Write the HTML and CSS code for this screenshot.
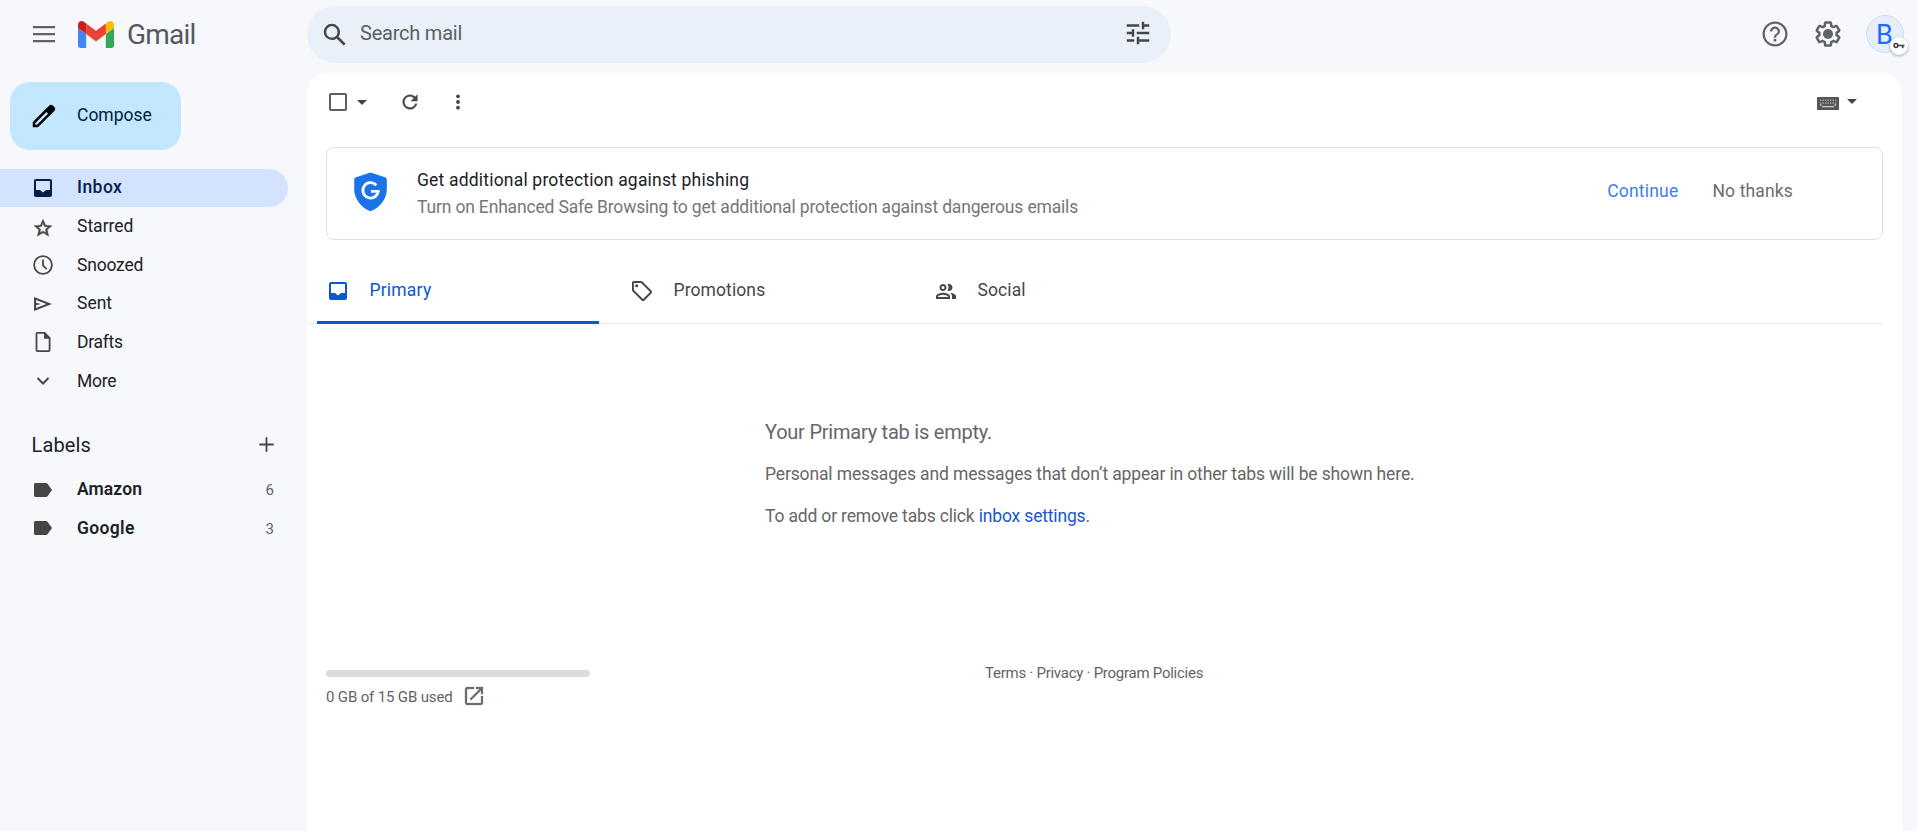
FILE: index.html
```html
<!DOCTYPE html>
<html lang="en">
<head>
<meta charset="utf-8">
<title>Gmail</title>
<link rel="stylesheet" href="styles.css">
</head>
<body>
<header class="header">
  <div class="brand">
    <svg class="menu" viewBox="0 0 30 30"><path d="M4 8.2h22M4 15.2h22M4 22.2h22" stroke="#5f6368" stroke-width="2.2"/></svg>
    <svg class="logo" viewBox="52 42 88 66"><path fill="#4285f4" d="M58 108h14V74L52 59v43c0 3.32 2.69 6 6 6"/><path fill="#34a853" d="M120 108h14c3.32 0 6-2.69 6-6V59l-20 15"/><path fill="#fbbc04" d="M120 48v26l20-15v-8c0-7.42-8.47-11.65-14.4-7.2"/><path fill="#ea4335" d="M72 74V48l24 18 24-18v26L96 92"/><path fill="#c5221f" d="M52 51v8l20 15V48l-5.6-4.2c-5.94-4.45-14.4-.22-14.4 7.2"/></svg>
    <span class="wordmark">Gmail</span>
  </div>
  <div class="search">
    <svg class="i30" viewBox="0 0 24 24"><path d="M20.49 19l-5.73-5.73C15.53 12.2 16 10.91 16 9.5A6.5 6.5 0 1 0 9.5 16c1.41 0 2.7-.47 3.77-1.24L19 20.49 20.49 19zM5 9.5C5 7.01 7.01 5 9.5 5S14 7.01 14 9.5 11.99 14 9.5 14 5 11.99 5 9.5z"/></svg>
    <span class="search-text">Search mail</span>
    <svg class="i30 tune" viewBox="0 0 24 24"><path d="M3 17v2h6v-2H3zM3 5v2h10V5H3zm10 16v-2h8v-2h-8v-2h-2v6h2zM7 9v2H3v2h4v2h2V9H7zm14 4v-2H11v2h10zm-6-4h2V7h4V5h-4V3h-2v6z"/></svg>
  </div>
  <div class="account">
    <svg class="i30 gray" viewBox="0 0 24 24"><path d="M11 18h2v-2h-2v2zm1-16C6.48 2 2 6.48 2 12s4.48 10 10 10 10-4.48 10-10S17.52 2 12 2zm0 18.2c-4.5 0-8.2-3.7-8.2-8.2S7.5 3.800 12 3.800s8.200 3.700 8.200 8.200-3.700 8.200-8.200 8.200zm0-14.200c-2.210 0-4 1.790-4 4h1.800c0-1.200 1-2.200 2.200-2.200s2.200 1 2.200 2.200c0 2-3.100 1.750-3.100 5h1.800c0-2.250 3.100-2.500 3.100-5 0-2.210-1.790-4-4-4z"/></svg>
    <svg class="i30 gray" viewBox="0 0 24 24"><path d="M13.850 22.250h-3.700c-.740 0-1.360-.540-1.450-1.270l-.270-1.890c-.270-.140-.530-.290-.790-.460l-1.800.720c-.700.260-1.470-.030-1.810-.650L2.200 15.530c-.350-.660-.200-1.440.360-1.880l1.530-1.190c-.010-.150-.020-.300-.020-.460 0-.150.010-.310.020-.460l-1.520-1.190c-.590-.450-.740-1.260-.370-1.880l1.850-3.190c.340-.620 1.110-.900 1.790-.630l1.810.730c.260-.170.520-.320.780-.460l.270-1.910c.090-.700.710-1.250 1.440-1.250h3.700c.740 0 1.360.540 1.450 1.270l.270 1.890c.270.140.530.290.790.460l1.800-.720c.710-.260 1.480.030 1.820.650l1.840 3.180c.360.660.200 1.440-.360 1.880l-1.520 1.190c.010.150.020.300.020.460s-.010.310-.020.460l1.520 1.190c.560.450.720 1.230.370 1.860l-1.860 3.220c-.340.620-1.110.900-1.800.630l-1.800-.720c-.260.170-.520.320-.780.460l-.270 1.910c-.100.680-.720 1.220-1.460 1.220zm-3.230-2h2.760l.370-2.550.530-.220c.440-.180.880-.440 1.340-.780l.450-.340 2.380.960 1.380-2.400-2.030-1.580.070-.560c.030-.260.060-.510.060-.780s-.030-.530-.060-.780l-.070-.560 2.030-1.580-1.390-2.400-2.390.960-.450-.350c-.420-.320-.870-.580-1.330-.770l-.520-.220-.370-2.550h-2.760l-.370 2.550-.530.210c-.440.190-.880.440-1.340.790l-.450.330-2.380-.950-1.390 2.390 2.030 1.580-.070.560a7 7 0 0 0-.060.790c0 .260.020.530.060.780l.070.560-2.030 1.580 1.380 2.400 2.390-.960.450.350c.430.330.860.580 1.330.770l.530.220.380 2.550z"/><circle cx="12" cy="12" r="4"/></svg>
    <div class="avatar">B<span class="badge"><svg viewBox="0 0 12 8"><circle cx="3" cy="3.500" r="1.900" fill="none" stroke="#3c4043" stroke-width="1.500"/><path d="M5 3.500h6.500M9.700 3.500v2.800" fill="none" stroke="#3c4043" stroke-width="1.600"/></svg></span></div>
  </div>
</header>
<div class="body">
  <nav class="side">
    <div class="compose"><svg class="i30" viewBox="0 0 24 24"><path fill="#000" d="M20.410 4.940l-1.350-1.350c-.780-.780-2.050-.780-2.830 0L3 16.820V21h4.180L20.410 7.770c.790-.780.790-2.050 0-2.830zM6.410 19.060H5v-1.360l8.900-8.900 1.360 1.360-8.850 8.900z"/></svg><span class="t-compose">Compose</span></div>
    <div class="item on"><svg class="i24" viewBox="0 0 24 24"><path fill="#041e49" d="M19 3H5a2 2 0 0 0-2 2v14c0 1.100.900 2 2 2h14c1.100 0 2-.900 2-2V5a2 2 0 0 0-2-2zm0 11h-4l-3 2.600L9 14H5V5h14v9z"/></svg><span class="t-inbox">Inbox</span></div>
    <div class="item"><svg class="i24 low" viewBox="0 0 24 24"><path stroke="#444746" stroke-width=".4" d="M21 9.700l-6.300-.550L12 3.300 9.300 9.150 3 9.700l4.770 4.150L6.300 20.200 12 16.850l5.700 3.350-1.470-6.350L21 9.700zM12 14.900l-3.120 1.900.830-3.540-2.750-2.380 3.620-.31L12 7.300l1.420 3.340 3.620.31-2.750 2.380.830 3.550L12 14.900z"/></svg><span class="t-starred">Starred</span></div>
    <div class="item"><svg class="i24" viewBox="0 0 24 24"><path d="M12 2.200a9.800 9.800 0 1 0 0 19.600 9.800 9.800 0 0 0 0-19.600zm0 17.800a8 8 0 1 1 0-16 8 8 0 0 1 0 16zm.9-13.500h-1.800v6.200l4 4 1.200-1.200-3.400-3.500V6.500z"/></svg><span class="t-snoozed">Snoozed</span></div>
    <div class="item"><svg class="i24" viewBox="0 0 24 24"><path d="M3 5v14l18-7L3 5zm2 3l10.500 4L5 16v-2.700l5-1.300-5-1.300V8z"/></svg><span class="t-sent">Sent</span></div>
    <div class="item"><svg class="i24" viewBox="0 0 24 24"><path d="M14 2H6.500C5.400 2 4.600 2.900 4.600 4v16c0 1.100.8 2 1.900 2h11c1.100 0 2-.9 2-2V7.500L14 2zM6.400 20.200V3.800H13v5h4.700v11.400H6.400z"/></svg><span class="t-drafts">Drafts</span></div>
    <div class="item"><svg class="i24" viewBox="0 0 24 24"><path d="M6.500 9l5.500 5.500L17.500 9" fill="none" stroke="#444746" stroke-width="2"/></svg><span class="t-more">More</span></div>
    <div class="labels-head"><span class="t-labels">Labels</span><svg class="plus" viewBox="0 0 24 24"><path d="M12 4.500v15M4.500 12h15" stroke="#444746" stroke-width="1.900"/></svg></div>
    <div class="item lab"><svg class="i24" viewBox="0 0 24 24"><path d="M16.500 5.800C16.200 5.300 15.600 5 15 5H4.500C3.700 5 3 5.700 3 6.500v11c0 .8.700 1.500 1.500 1.500H15c.6 0 1.200-.3 1.500-.8L21 12l-4.500-6.200z"/></svg><span class="t-amazon">Amazon</span><span class="count">6</span></div>
    <div class="item lab"><svg class="i24" viewBox="0 0 24 24"><path d="M16.500 5.800C16.200 5.300 15.600 5 15 5H4.500C3.700 5 3 5.700 3 6.500v11c0 .8.700 1.500 1.500 1.500H15c.6 0 1.200-.3 1.500-.8L21 12l-4.500-6.200z"/></svg><span class="t-google">Google</span><span class="count">3</span></div>
  </nav>
  <main class="panel">
    <div class="toolbar">
      <span class="check"></span><span class="caret c1"></span>
      <svg class="refresh" viewBox="0 0 24 24"><path stroke="#444746" stroke-width=".4" d="M17.650 6.350A7.960 7.960 0 0 0 12 4a8 8 0 1 0 7.730 10h-2.080A6 6 0 1 1 12 6c1.660 0 3.140.690 4.220 1.780L13 11h7V4l-2.350 2.350z"/></svg>
      <svg class="dots" viewBox="0 0 24 24"><circle cx="12" cy="6.300" r="1.900"/><circle cx="12" cy="12" r="1.900"/><circle cx="12" cy="17.700" r="1.900"/></svg>
      <svg class="keyboard" viewBox="0 0 22 13"><rect width="22" height="13" rx=".8" fill="#555756"/><path d="M3 3.300h16M3 6h16" stroke="#aaa" stroke-width="1.500" stroke-dasharray="1.300 1.200"/><path d="M3 8h1.500M17.500 8H19M5 9.700h12" stroke="#ccc" stroke-width="1.300"/></svg><span class="caret c2"></span>
    </div>
    <section class="banner">
      <svg class="shield" viewBox="0 0 33 40"><path fill="#1a73e8" d="M16.500.5L31 5.200c1.100.4 1.800 1.300 1.800 2.500V17c0 10.200-6.800 18.600-16.300 22.300C7 35.600.2 27.200.2 17V7.700c0-1.200.7-2.100 1.800-2.500z"/><path d="M22.300 13.200a7.700 7.700 0 1 0 1.900 6.100H17" fill="none" stroke="#fff" stroke-width="2.800"/></svg>
      <div class="banner-text"><span class="b-title">Get additional protection against phishing</span><span class="b-sub">Turn on Enhanced Safe Browsing to get additional protection against dangerous emails</span></div>
      <span class="continue">Continue</span><span class="nothanks">No thanks</span>
    </section>
    <div class="tabs">
      <div class="tab active"><svg class="i24" viewBox="0 0 24 24"><path fill="#0b57d0" d="M19 3H5a2 2 0 0 0-2 2v14c0 1.100.900 2 2 2h14c1.100 0 2-.900 2-2V5a2 2 0 0 0-2-2zm0 11h-4l-3 2.600L9 14H5V5h14v9z"/></svg><span class="t-primary">Primary</span></div>
      <div class="tab"><svg class="i24" viewBox="0 0 24 24"><path d="M21.400 11.600l-9-9C12 2.200 11.500 2 11 2H4c-1.100 0-2 .9-2 2v7c0 .6.200 1.100.6 1.400l9 9c.4.400.9.600 1.400.6s1-.2 1.400-.6l7-7c.4-.4.600-.9.600-1.400s-.2-1.100-.6-1.400zM13 20l-9.100-9V3.900H11l9.100 9L13 20z"/><circle cx="6.700" cy="6.700" r="1.500"/></svg><span class="t-promo">Promotions</span></div>
      <div class="tab"><svg class="i24" viewBox="0 0 24 24"><path d="M9 13.750c-2.340 0-7 1.170-7 3.500V20h14v-2.750c0-2.330-4.660-3.500-7-3.500zM4 18v-.75c.840-.58 3.210-1.500 5-1.500s4.160.92 5 1.500V18H4zM9 12c1.930 0 3.500-1.570 3.500-3.500S10.930 5 9 5 5.500 6.570 5.500 8.500 7.070 12 9 12zm0-5a1.500 1.500 0 1 1 0 3 1.500 1.500 0 0 1 0-3zm7.040 6.810c1.160.840 1.960 1.960 1.960 3.440V20h4v-2.750c0-2.020-3.500-3.170-5.960-3.440zM15 12c1.930 0 3.500-1.570 3.500-3.500S16.930 5 15 5c-.540 0-1.040.130-1.500.350.630.890 1 1.980 1 3.150s-.370 2.260-1 3.150c.460.220.960.350 1.500.350z"/></svg><span class="t-social">Social</span></div>
    </div>
    <section class="empty">
      <p class="e-title"><span>Your Primary tab is empty.</span></p>
      <p class="e-one"><span>Personal messages and messages that don’t appear in other tabs will be shown here.</span></p>
      <p class="e-two"><span>To add or remove tabs click <a>inbox settings</a>.</span></p>
    </section>
    <footer class="footer">
      <div class="storage"><div class="bar"></div><div class="used"><span>0 GB of 15 GB used</span><svg class="open" viewBox="0 0 24 24"><path d="M19 19H5V5h7V3H5a2 2 0 0 0-2 2v14a2 2 0 0 0 2 2h14c1.100 0 2-.9 2-2v-7h-2v7zM14 3v2h3.590l-9.830 9.830 1.410 1.410L19 6.410V10h2V3h-7z" stroke="#6a6e73" stroke-width=".3"/></svg></div></div>
      <div class="links"><span>Terms · Privacy · Program Policies</span></div>
    </footer>
  </main>
</div>
</body>
</html>
```
FILE: styles.css
```css
* { box-sizing: border-box; }
body { margin: 0; height: 831px; overflow: hidden; background: #f6f8fc; color: #202124; font-family: Roboto, "Liberation Sans", sans-serif; font-size: 17.5px; white-space: nowrap; }
svg { display: block; flex: none; fill: #444746; }
p { margin: 0; }
.i30 { width: 30px; height: 30px; }
.i24 { width: 24px; height: 24px; }
.gray { fill: #5f6368; }

.header { display: flex; height: 73px; align-items: flex-start; }
.brand { display: flex; align-items: center; width: 307px; height: 68px; padding-left: 28.5px; }
.menu { width: 30px; height: 30px; }
.logo { width: 36px; height: 27px; margin-left: 19.5px; }
.wordmark { margin-left: 13px; font-size: 28px; color: #55585c; letter-spacing: -.8px; }
.search { display: flex; align-items: center; width: 864px; height: 57px; margin-top: 6px; padding: 0 18px 0 13px; border-radius: 29px; background: #e9f0fa; }
.search-text { margin: -3px 0 0 10px; flex: 1; font-size: 20px; color: #5c5f5e; letter-spacing: -.22px; }
.search .tune { margin-top: -3px; }
.account { display: flex; align-items: center; gap: 23px; height: 68px; margin-left: auto; padding-right: 13.5px; }
.avatar { position: relative; width: 38px; height: 38px; border: 1px solid #d3dced; border-radius: 50%; background: #e6eefb; color: #1a6cf0; font-size: 27px; line-height: 38px; text-align: center; }
.badge { position: absolute; left: 23px; top: 21px; display: grid; place-items: center; width: 18px; height: 18px; border-radius: 50%; background: #fff; box-shadow: 0 1px 3px rgba(0,0,0,.35); }
.badge svg { width: 12px; height: 8px; }

.body { display: flex; height: 758px; }
.side { width: 307px; padding-top: 9px; }
.compose { display: flex; align-items: center; width: 171px; height: 68px; margin: 0 0 19px 10px; padding-left: 18.5px; border-radius: 20px; background: #c2e7ff; color: #001d35; }
.compose span { margin-left: 18.5px; margin-top: -2px; }
.item { display: flex; align-items: center; width: 288px; height: 38.7px; padding-left: 31px; }
.item > span { margin: -1px 0 0 22px; }
.on { height: 38px; border-radius: 0 19px 19px 0; background: #d3e3fd; color: #041e49; font-weight: 500; }
.on > .t-inbox { margin-top: -2px; letter-spacing: .45px; }
.low { margin-top: 3px; }
.t-snoozed { letter-spacing: -.2px; }
.t-drafts, .t-more { letter-spacing: -.3px; }
.labels-head { display: flex; align-items: center; justify-content: space-between; width: 288px; height: 38px; margin: 25.5px 0 6.5px; padding: 0 10.500px 0 31.5px; font-size: 20px; }
.t-labels { letter-spacing: .15px; }
.plus { width: 23px; height: 23px; }
.lab > span { font-weight: 600; }
.t-amazon { letter-spacing: .1px; }
.t-google { letter-spacing: .35px; }
.lab > .count { margin: 1px 14px 0 auto; font-size: 15px; font-weight: 400; color: #5f6368; }

.panel { width: 1595px; border-radius: 20px 20px 0 0; background: #fff; }
.toolbar { display: flex; align-items: center; height: 74px; padding: 0 45px 16px 22px; }
.check { width: 18px; height: 18px; border: 2px solid #5c5f5e; border-radius: 2px; }
.caret { border: 5px solid transparent; border-top-color: #444746; border-bottom: 0; }
.c1 { margin-left: 10px; }
.refresh { width: 22px; height: 22px; margin-left: 32px; }
.dots { width: 24px; height: 24px; margin: 0 auto 0 25px; }
.keyboard { width: 22px; height: 13px; margin-top: 3px; }
.c2 { margin: -2px 0 0 8px; }
.banner { display: flex; align-items: center; width: 1557px; height: 93px; margin-left: 19px; padding: 0 89px 0 27px; border: 1px solid #dfdfdf; border-radius: 8px; }
.shield { width: 33px; height: 40px; margin-top: -4px; }
.banner-text { display: grid; gap: 6px; margin: 0 auto 0 30px; line-height: 21px; }
.b-title { letter-spacing: .19px; }
.b-sub { color: #757775; letter-spacing: -.167px; }
.continue { margin: -5px 34px 0 0; color: #3f7cf4; letter-spacing: .2px; }
.nothanks { margin-top: -5px; color: #6c6c6c; letter-spacing: .15px; }
.tabs { display: flex; width: 1576px; height: 68px; margin-top: 16px; padding-left: 10px; border-bottom: 1px solid #ebebeb; gap: 22px; }
.tab { display: flex; align-items: center; width: 282px; height: 68px; padding: 1px 0 0 9px; color: #444746; letter-spacing: .1px; }
.tab span { margin: -2px 0 0 19.5px; }
.t-primary { letter-spacing: .2px; }
.active { color: #0b57d0; padding-top: 4px; border-bottom: 3px solid #0b57d0; border-radius: 3px 3px 0 0; }
.empty { display: grid; grid-template-rows: 42px 42px 42px; align-items: center; margin: 87px 0 0 458px; color: #666; }
.e-title { font-size: 20px; letter-spacing: -.23px; }
.e-one { letter-spacing: -.14px; }
.e-two { letter-spacing: -.17px; }
.empty a { color: #1a56cc; }
.footer { display: flex; margin: 133px 0 0 19px; font-size: 15px; color: #5f6368; }
.storage { width: 264px; }
.bar { height: 7px; border-radius: 4px; background: #dadce0; }
.used { display: flex; align-items: center; margin-top: 7px; letter-spacing: -.15px; }
.used span { margin-top: 2px; }
.open { width: 24px; height: 24px; margin-left: 9px; fill: #6a6e73; }
.links { margin: -6px 0 0 395px; letter-spacing: -.26px; }
```
